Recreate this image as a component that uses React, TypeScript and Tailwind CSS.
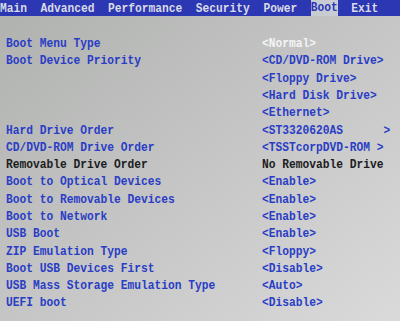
const rows: { label: string; value: string; tone: 'blue' | 'white' | 'black' }[] = [
  { label: 'Boot Menu Type', value: '<Normal>', tone: 'white' },
  { label: 'Boot Device Priority', value: '<CD/DVD-ROM Drive>', tone: 'blue' },
  { label: '', value: '<Floppy Drive>', tone: 'blue' },
  { label: '', value: '<Hard Disk Drive>', tone: 'blue' },
  { label: '', value: '<Ethernet>', tone: 'blue' },
  { label: 'Hard Drive Order', value: '<ST3320620AS      >', tone: 'blue' },
  { label: 'CD/DVD-ROM Drive Order', value: '<TSSTcorpDVD-ROM >', tone: 'blue' },
  { label: 'Removable Drive Order', value: 'No Removable Drive', tone: 'black' },
  { label: 'Boot to Optical Devices', value: '<Enable>', tone: 'blue' },
  { label: 'Boot to Removable Devices', value: '<Enable>', tone: 'blue' },
  { label: 'Boot to Network', value: '<Enable>', tone: 'blue' },
  { label: 'USB Boot', value: '<Enable>', tone: 'blue' },
  { label: 'ZIP Emulation Type', value: '<Floppy>', tone: 'blue' },
  { label: 'Boot USB Devices First', value: '<Disable>', tone: 'blue' },
  { label: 'USB Mass Storage Emulation Type', value: '<Auto>', tone: 'blue' },
  { label: 'UEFI boot', value: '<Disable>', tone: 'blue' },
];

const tabs = ['Main', 'Advanced', 'Performance', 'Security', 'Power', 'Boot', 'Exit'];

export default function App() {
  return (
    <div className="w-[400px] h-[321px] overflow-hidden bg-linear-to-br from-[#afb1af] via-[#c4c5c4] to-[#dadada] font-['Liberation_Mono',monospace] text-[11.25px] font-bold leading-none">
      <div className="h-[16px] bg-[#2b37b3] flex items-stretch whitespace-pre text-[#d9dbe6]">
        {tabs.map((t, i) => (
          <span key={t} className="flex items-center">
            {t === 'Boot' ? (
              <span className="h-full flex items-center pt-[2px] bg-[#c9cbd2] text-[#2a36b8]">
                <span className="scale-y-[1.2]">{t}</span>
              </span>
            ) : (
              <span className="pt-[2px] scale-y-[1.2]">{t}</span>
            )}
            {i < tabs.length - 1 && <span>{'  '}</span>}
          </span>
        ))}
      </div>

      <div className="pt-[20px] flex flex-col">
        {rows.map((r, i) => (
          <div key={i} className="h-[17.3px] flex items-center whitespace-pre">
            <span className={`w-[262px] pl-[6px] overflow-hidden scale-y-[1.2] origin-center ${r.tone === 'black' ? 'text-[#1c1c22]' : 'text-[#2a3dc6]'}`}>
              {r.label}
            </span>
            <span
              className={`scale-y-[1.2] ${
                r.tone === 'white'
                  ? 'text-[#f4f4f6]'
                  : r.tone === 'black'
                  ? 'text-[#1c1c22]'
                  : 'text-[#2a3dc6]'
              }`}
            >
              {r.value}
            </span>
          </div>
        ))}
      </div>
    </div>
  );
}
